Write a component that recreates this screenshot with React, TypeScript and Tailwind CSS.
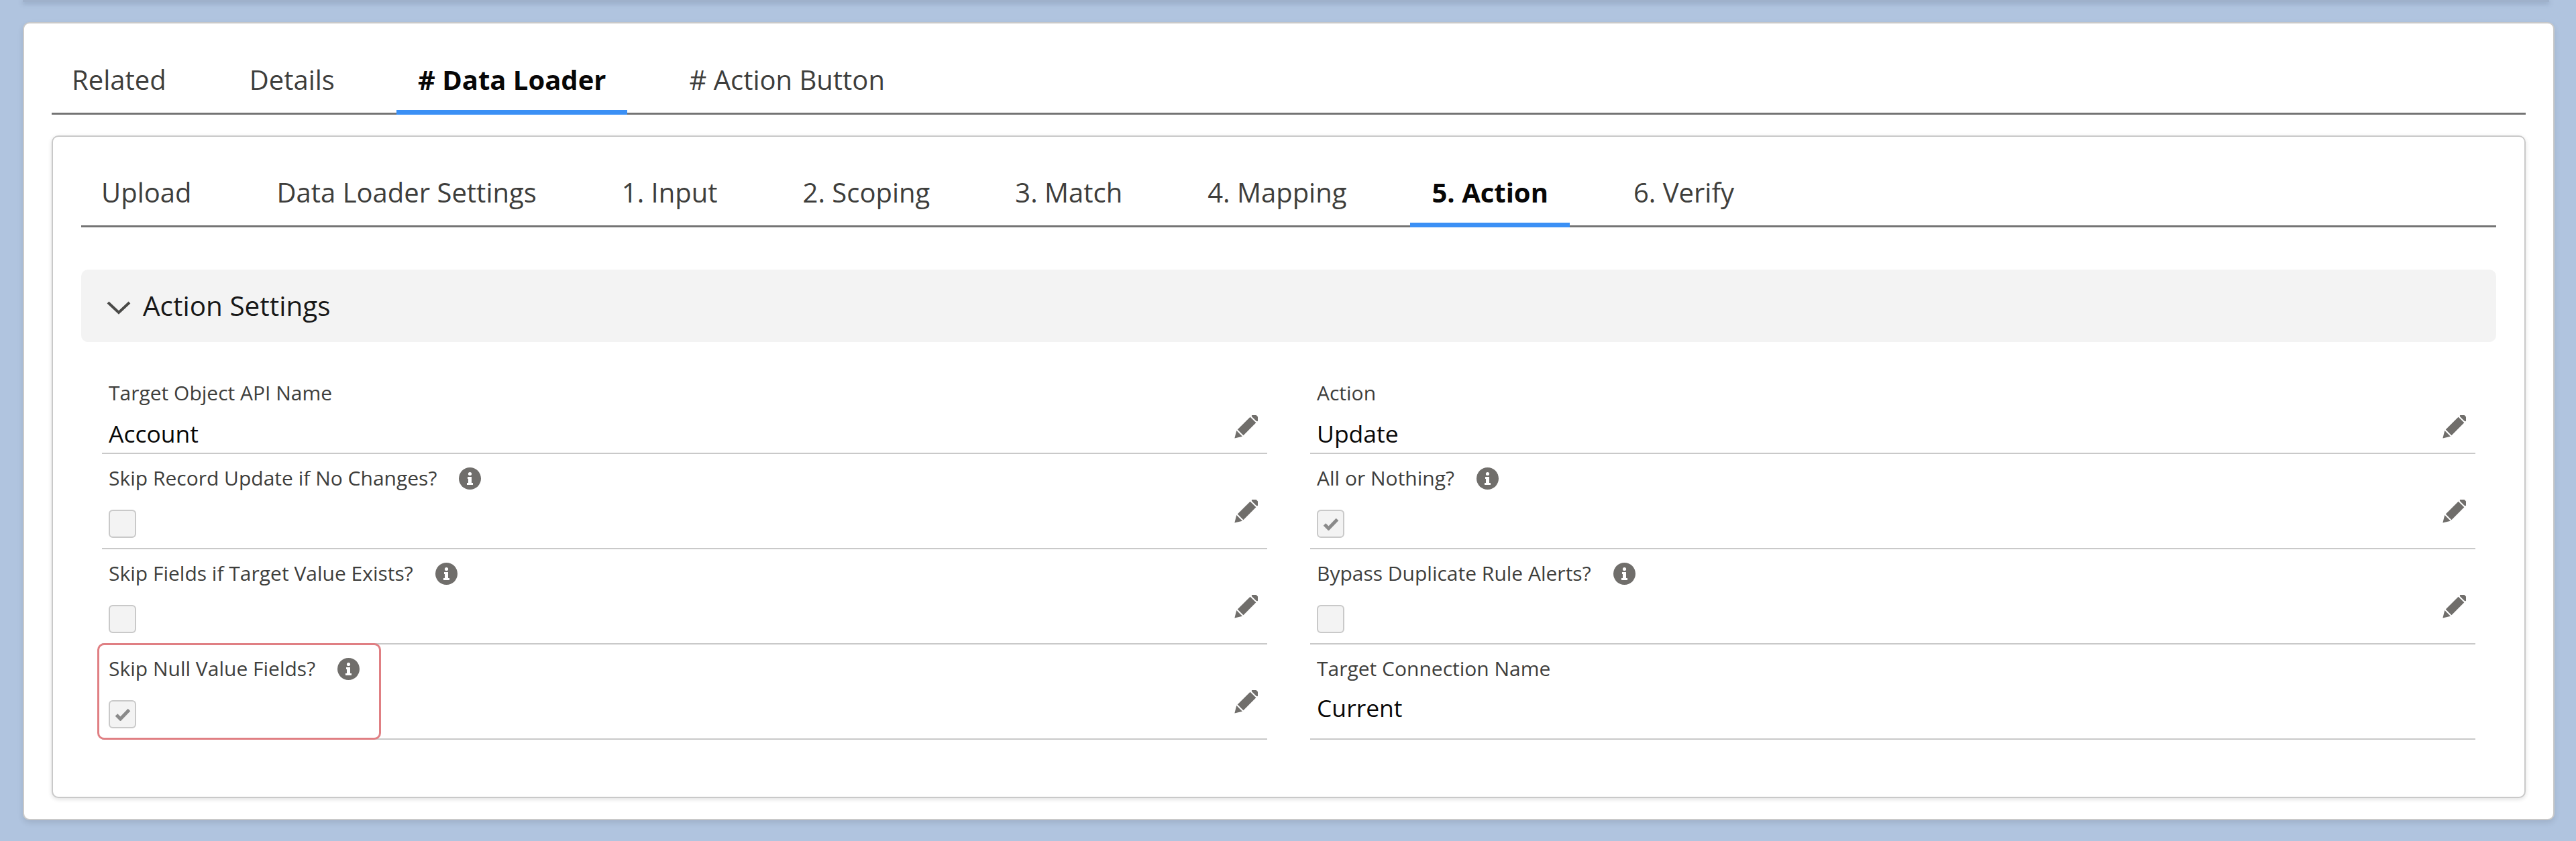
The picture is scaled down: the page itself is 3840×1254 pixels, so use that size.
import React from "react";

const font = { fontFamily: '"Open Sans", "Noto Sans", sans-serif' };

function Tabs({ items, active, gap }: { items: string[]; active: string; gap: string }) {
  return (
    <div className={`flex ${gap} border-b-[3px] border-[#747474]`}>
      {items.map((t) => (
        <div
          key={t}
          className={`relative px-[32px] first:pl-[30px] pb-[23px] pt-[16px] text-[40px] leading-[52px] whitespace-nowrap ${
            t === active ? "font-bold text-[#080707]" : "text-[#3e3e3c]"
          }`}
        >
          {t}
          {t === active && <div className="absolute left-0 right-0 bottom-[-3px] h-[7px] bg-[#3b90f5]" />}
        </div>
      ))}
    </div>
  );
}

function Pencil() {
  return (
    <svg width="38" height="38" viewBox="0 0 37 37" className="shrink-0">
      <g fill="#706e6b" transform="rotate(45 18.5 18.5)">
        <rect x="12.5" y="-6" width="12" height="6" rx="2" />
        <rect x="12.5" y="2" width="12" height="26" />
        <path d="M12.5 30h12l-6 10z" />
      </g>
    </svg>
  );
}

function Info() {
  return (
    <svg width="33" height="33" viewBox="0 0 33 33" className="shrink-0">
      <circle cx="16.5" cy="16.5" r="16.5" fill="#706e6b" />
      <circle cx="16.5" cy="9.5" r="2.6" fill="#fff" />
      <path d="M13 14h6v9h2v3H12v-3h2v-6h-1z" fill="#fff" />
    </svg>
  );
}

function Check({ on }: { on: boolean }) {
  return (
    <div className="w-[41px] h-[42px] rounded-[6px] border-2 border-[#c9c9c9] bg-[#f3f3f3] flex items-center justify-center">
      {on && (
        <svg width="24" height="19" viewBox="0 0 24 19">
          <path d="M2.5 10l6 6L21.5 2.5" fill="none" stroke="#8a8a8a" strokeWidth="5" />
        </svg>
      )}
    </div>
  );
}

type F = { label: string; value?: string; check?: boolean; info?: boolean; pencil?: boolean; red?: boolean };

function Field({ f, tall }: { f: F; tall: boolean }) {
  const isCheck = f.check !== undefined;
  return (
    <div
      className={`relative flex items-end justify-between border-b-2 border-[#c9c9c9] pl-[10px] pr-[14px] ${
        tall ? "h-[142px]" : "h-[128px]"
      }`}
    >
      <div className="flex flex-col">
        <div className="flex items-center gap-[33px] h-[40px] text-[30px] leading-[40px] text-[#3e3e3c] whitespace-nowrap">
          {f.label}
          {f.info && <Info />}
        </div>
        {isCheck ? (
          <div className="mt-[27px] mb-[15px]">
            <Check on={!!f.check} />
          </div>
        ) : (
          <div
            className={`h-[46px] text-[35.5px] leading-[46px] text-[#080707] ${
              tall ? "mt-[15px] mb-[23px]" : "mt-[17px] mb-[6px]"
            }`}
          >
            {f.value}
          </div>
        )}
      </div>
      {f.pencil && (
        <div className={tall ? "mb-[34px]" : "mb-[18px]"}>
          <Pencil />
        </div>
      )}
      {f.red && (
        <div className="absolute left-[-7px] top-[-2px] bottom-[-2px] w-[423px] rounded-[10px] border-[3px] border-[#e07f83]" />
      )}
    </div>
  );
}

const left: F[] = [
  { label: "Target Object API Name", value: "Account", pencil: true },
  { label: "Skip Record Update if No Changes?", check: false, info: true, pencil: true },
  { label: "Skip Fields if Target Value Exists?", check: false, info: true, pencil: true },
  { label: "Skip Null Value Fields?", check: true, info: true, pencil: true, red: true },
];
const right: F[] = [
  { label: "Action", value: "Update", pencil: true },
  { label: "All or Nothing?", check: true, info: true, pencil: true },
  { label: "Bypass Duplicate Rule Alerts?", check: false, info: true, pencil: true },
  { label: "Target Connection Name", value: "Current" },
];

export default function App() {
  return (
    <div className="min-h-[1254px] bg-[#b0c4df] overflow-hidden" style={font}>
      <div className="h-[3px] ml-[34px] mr-[40px] bg-[#9fb1cb] shadow-[0_2px_6px_rgba(90,110,140,0.5)]" />
      <div className="mt-[30px] ml-[34px] w-[3774px] h-[1190px] bg-white rounded-[10px] border-2 border-[#c9c9c9] shadow-[0_4px_8px_rgba(0,0,0,0.1)] px-[41px] pt-[42px]">
        <Tabs items={["Related", "Details", "# Data Loader", "# Action Button"]} active="# Data Loader" gap="gap-[60px]" />
        <div className="mt-[31px] h-[988px] rounded-[10px] border-2 border-[#c9c9c9] shadow-[0_2px_6px_rgba(0,0,0,0.12)] bg-white px-[42px] pt-[41px]">
          <Tabs
            items={["Upload", "Data Loader Settings", "1. Input", "2. Scoping", "3. Match", "4. Mapping", "5. Action", "6. Verify"]}
            active="5. Action"
            gap="gap-[63px]"
          />
          <div className="mt-[63px] h-[108px] rounded-[10px] bg-[#f3f3f3] flex items-center pl-[38px] gap-[18px]">
            <svg width="36" height="22" viewBox="0 0 36 22" className="mt-[6px]">
              <path d="M2 3l16 15L34 3" fill="none" stroke="#4a4a48" strokeWidth="4" />
            </svg>
            <span className="text-[40.5px] leading-[52px] text-[#181818]">Action Settings</span>
          </div>
          <div className="mt-[39px] mx-[31px] grid grid-cols-2 gap-x-[64px]">
            <div className="flex flex-col">
              {left.map((f, i) => (
                <Field key={f.label} f={f} tall={i > 0} />
              ))}
            </div>
            <div className="flex flex-col">
              {right.map((f, i) => (
                <Field key={f.label} f={f} tall={i > 0} />
              ))}
            </div>
          </div>
        </div>
      </div>
    </div>
  );
}
